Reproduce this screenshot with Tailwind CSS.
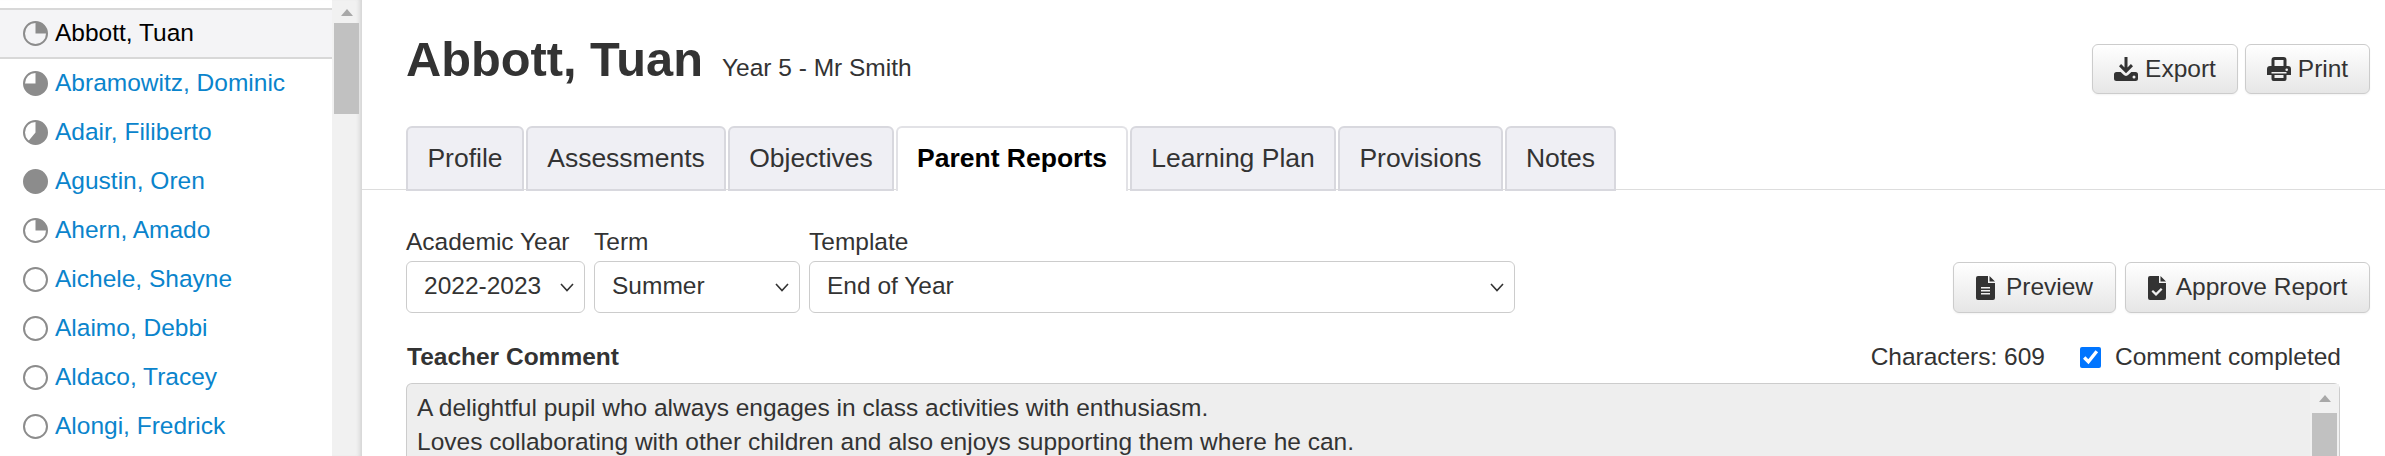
<!DOCTYPE html>
<html lang="en">
<head>
    <meta charset="UTF-8">
    <title>Abbott, Tuan</title>
    <script src="https://cdn.jsdelivr.net/npm/@tailwindcss/browser@4"></script>
</head>
<body class="bg-white font-['Liberation_Sans',Arial,sans-serif] text-[24.5px] text-[#333] overflow-hidden">
<div class="flex h-[456px] w-[2385px] overflow-hidden">

    <!-- pupil list -->
    <aside class="flex w-[362px] shrink-0 shadow-[inset_-6px_0_5px_-4px_#d0d0d0]">
        <ul class="w-[332px] pt-2">
            <li class="flex h-[51px] items-center gap-[7px] border-y-2 border-[#d8d8d8] bg-[#f4f4f6] pl-[23px] text-black">
                <svg class="w-[25px] h-[25px]" viewBox="0 0 25 25"><circle cx="12.5" cy="12.5" r="11.5" fill="none" stroke="#8c8c8c" stroke-width="2"/><path d="M12.5 12.5V1A11.5 11.5 0 0 1 24 12.5Z" fill="#8c8c8c"/></svg>
                <span>Abbott, Tuan</span>
            </li>
            <li class="flex h-[49px] items-center gap-[7px] pl-[23px] text-[#0a84cc]">
                <svg class="w-[25px] h-[25px]" viewBox="0 0 25 25"><circle cx="12.5" cy="12.5" r="11.5" fill="none" stroke="#8c8c8c" stroke-width="2"/><path d="M12.5 12.5V1A11.5 11.5 0 1 1 1 12.5Z" fill="#8c8c8c"/></svg>
                <span>Abramowitz, Dominic</span>
            </li>
            <li class="flex h-[49px] items-center gap-[7px] pl-[23px] text-[#0a84cc]">
                <svg class="w-[25px] h-[25px]" viewBox="0 0 25 25"><circle cx="12.5" cy="12.5" r="11.5" fill="none" stroke="#8c8c8c" stroke-width="2"/><path d="M12.5 12.5V1A11.5 11.5 0 1 1 5 21.5Z" fill="#8c8c8c"/></svg>
                <span>Adair, Filiberto</span>
            </li>
            <li class="flex h-[49px] items-center gap-[7px] pl-[23px] text-[#0a84cc]">
                <svg class="w-[25px] h-[25px]" viewBox="0 0 25 25"><circle cx="12.5" cy="12.5" r="12.5" fill="#8c8c8c"/></svg>
                <span>Agustin, Oren</span>
            </li>
            <li class="flex h-[49px] items-center gap-[7px] pl-[23px] text-[#0a84cc]">
                <svg class="w-[25px] h-[25px]" viewBox="0 0 25 25"><circle cx="12.5" cy="12.5" r="11.5" fill="none" stroke="#8c8c8c" stroke-width="2"/><path d="M12.5 12.5V1A11.5 11.5 0 0 1 24 12.5Z" fill="#8c8c8c"/></svg>
                <span>Ahern, Amado</span>
            </li>
            <li class="flex h-[49px] items-center gap-[7px] pl-[23px] text-[#0a84cc]">
                <svg class="w-[25px] h-[25px]" viewBox="0 0 25 25"><circle cx="12.5" cy="12.5" r="11.5" fill="none" stroke="#8c8c8c" stroke-width="2"/></svg>
                <span>Aichele, Shayne</span>
            </li>
            <li class="flex h-[49px] items-center gap-[7px] pl-[23px] text-[#0a84cc]">
                <svg class="w-[25px] h-[25px]" viewBox="0 0 25 25"><circle cx="12.5" cy="12.5" r="11.5" fill="none" stroke="#8c8c8c" stroke-width="2"/></svg>
                <span>Alaimo, Debbi</span>
            </li>
            <li class="flex h-[49px] items-center gap-[7px] pl-[23px] text-[#0a84cc]">
                <svg class="w-[25px] h-[25px]" viewBox="0 0 25 25"><circle cx="12.5" cy="12.5" r="11.5" fill="none" stroke="#8c8c8c" stroke-width="2"/></svg>
                <span>Aldaco, Tracey</span>
            </li>
            <li class="flex h-[49px] items-center gap-[7px] pl-[23px] text-[#0a84cc]">
                <svg class="w-[25px] h-[25px]" viewBox="0 0 25 25"><circle cx="12.5" cy="12.5" r="11.5" fill="none" stroke="#8c8c8c" stroke-width="2"/></svg>
                <span>Alongi, Fredrick</span>
            </li>
        </ul>
        <div class="flex w-[30px] flex-col bg-[#f1f1f1] pl-[2px] pr-[3px] shadow-[inset_-5px_0_4px_-3px_#d0d0d0]">
            <div class="flex h-[23px] items-center justify-center pt-[1px]">
                <div class="h-0 w-0 border-x-[6.5px] border-b-[7px] border-x-transparent border-b-[#a8a8a8]"></div>
            </div>
            <div class="h-[91px] bg-[#c1c1c1]"></div>
        </div>
    </aside>

    <!-- pupil detail -->
    <main class="min-w-0 flex-1">
        <div class="flex h-[126px] justify-between pl-[44px] pr-[15px]">
            <div class="flex items-baseline gap-[19px] pt-[29px]">
                <h1 class="text-[48.75px] leading-[60px] font-bold text-[#333]">Abbott, Tuan</h1>
                <span class="leading-none">Year 5 - Mr Smith</span>
            </div>
            <div class="flex gap-[7px] pt-[44px]">
                <button class="flex h-[50px] w-[146px] items-center justify-center gap-[7px] rounded-[6px] border border-[#ccc] bg-gradient-to-b from-white to-[#e6e6e6] shadow-[0_1px_2px_#0000000d]">
                    <svg class="w-[24px] h-[24px]" viewBox="0 0 24 24" fill="#333"><path d="M10.5 0h3v10.5l3.4-3.4 2.1 2.1-7 7-7-7 2.1-2.1 3.4 3.4Z"/><path d="M2.500 15h4.200l2.600 2.600a3.800 3.800 0 0 0 5.400 0l2.600-2.600h4.200a2.500 2.500 0 0 1 2.500 2.500v4a2.500 2.500 0 0 1-2.500 2.500h-19a2.500 2.500 0 0 1-2.500-2.500v-4A2.500 2.500 0 0 1 2.500 15Zm17.500 6.500a1.500 1.500 0 1 0 0-3 1.500 1.500 0 0 0 0 3Z" fill-rule="evenodd"/></svg>
                    <span>Export</span>
                </button>
                <button class="flex h-[50px] w-[125px] items-center justify-center gap-[7px] rounded-[6px] border border-[#ccc] bg-gradient-to-b from-white to-[#e6e6e6] shadow-[0_1px_2px_#0000000d]">
                    <svg class="w-[24px] h-[24px]" viewBox="0 0 24 24" fill="#333"><path fill-rule="evenodd" d="M4.500 9V3a3 3 0 0 1 3-3h9a3 3 0 0 1 3 3v6h-3V3h-9v6ZM3 9h18a3 3 0 0 1 3 3v6h-4.500v-3h-15v3H0v-6a3 3 0 0 1 3-3Zm18 3.800a1.300 1.300 0 1 0-2.600 0 1.300 1.300 0 0 0 2.600 0ZM4.500 16.500h15V22a2 2 0 0 1-2 2h-11a2 2 0 0 1-2-2Zm3 1.500v3h9v-3Z"/></svg>
                    <span>Print</span>
                </button>
            </div>
        </div>

        <!-- tabs -->
        <div class="flex h-[64px] gap-[2px] border-b border-[#ddd] pl-[44px] text-[26.5px]">
            <a class="h-[65px] w-[118px] rounded-t-[6px] border-2 border-[#d8d8de] bg-[#efeff4] text-center leading-[60px]">Profile</a>
            <a class="h-[65px] w-[200px] rounded-t-[6px] border-2 border-[#d8d8de] bg-[#efeff4] text-center leading-[60px]">Assessments</a>
            <a class="h-[65px] w-[166px] rounded-t-[6px] border-2 border-[#d8d8de] bg-[#efeff4] text-center leading-[60px]">Objectives</a>
            <a class="h-[65px] w-[232px] rounded-t-[6px] border-2 border-b-0 border-[#e2e2e6] bg-white text-center font-bold leading-[60px] text-black">Parent Reports</a>
            <a class="h-[65px] w-[206px] rounded-t-[6px] border-2 border-[#d8d8de] bg-[#efeff4] text-center leading-[60px]">Learning Plan</a>
            <a class="h-[65px] w-[165px] rounded-t-[6px] border-2 border-[#d8d8de] bg-[#efeff4] text-center leading-[60px]">Provisions</a>
            <a class="h-[65px] w-[111px] rounded-t-[6px] border-2 border-[#d8d8de] bg-[#efeff4] text-center leading-[60px]">Notes</a>
        </div>

        <!-- report form -->
        <div class="pl-[44px] pr-[45px]">
            <div class="flex items-end justify-between pt-[38px]">
                <div class="flex gap-[9px]">
                    <label class="flex w-[179px] flex-col">
                        <span class="h-[33px] leading-[28px]">Academic Year</span>
                        <span class="relative">
                            <select class="h-[52px] w-full appearance-none rounded-[6px] border border-[#ccc] bg-white pb-[1px] pl-[17px]"><option>2022-2023</option></select>
                            <svg class="pointer-events-none absolute right-[11px] top-[22px] h-[9px] w-[14px]" viewBox="0 0 14 9" fill="none" stroke="#333" stroke-width="1.600"><path d="M1 1l6 6.500L13 1"/></svg>
                        </span>
                    </label>
                    <label class="flex w-[206px] flex-col">
                        <span class="h-[33px] leading-[28px]">Term</span>
                        <span class="relative">
                            <select class="h-[52px] w-full appearance-none rounded-[6px] border border-[#ccc] bg-white pb-[1px] pl-[17px]"><option>Summer</option></select>
                            <svg class="pointer-events-none absolute right-[11px] top-[22px] h-[9px] w-[14px]" viewBox="0 0 14 9" fill="none" stroke="#333" stroke-width="1.600"><path d="M1 1l6 6.500L13 1"/></svg>
                        </span>
                    </label>
                    <label class="flex w-[706px] flex-col">
                        <span class="h-[33px] leading-[28px]">Template</span>
                        <span class="relative">
                            <select class="h-[52px] w-full appearance-none rounded-[6px] border border-[#ccc] bg-white pb-[1px] pl-[17px]"><option>End of Year</option></select>
                            <svg class="pointer-events-none absolute right-[11px] top-[22px] h-[9px] w-[14px]" viewBox="0 0 14 9" fill="none" stroke="#333" stroke-width="1.600"><path d="M1 1l6 6.500L13 1"/></svg>
                        </span>
                    </label>
                </div>
                <div class="mr-[-30px] flex gap-[9px]">
                    <button class="flex h-[51px] w-[163px] items-center justify-center gap-[11px] rounded-[6px] border border-[#ccc] bg-gradient-to-b from-white to-[#e6e6e6] shadow-[0_1px_2px_#0000000d]">
                        <svg class="w-[19px] h-[24px]" viewBox="0 0 19 24" fill="#333"><path fill-rule="evenodd" d="M2 0h10v7h7v15a2 2 0 0 1-2 2H2a2 2 0 0 1-2-2V2a2 2 0 0 1 2-2Zm3 11v1.500h9V11Zm0 3v1.500h9V14Zm0 3v1.500h9V17ZM13.500 0 19 5.500h-5.500Z"/></svg>
                        <span>Preview</span>
                    </button>
                    <button class="flex h-[51px] w-[245px] items-center justify-center gap-[10px] rounded-[6px] border border-[#ccc] bg-gradient-to-b from-white to-[#e6e6e6] shadow-[0_1px_2px_#0000000d]">
                        <svg class="w-[18px] h-[24px]" viewBox="0 0 18 24" fill="#333"><path fill-rule="evenodd" d="M2 0h9v7h7v15a2 2 0 0 1-2 2H2a2 2 0 0 1-2-2V2a2 2 0 0 1 2-2Zm1.500 15.500L8 20l6.500-6.500-1.600-1.600L8 16.800l-3-2.900ZM12.500 0 18 5.500h-5.500Z"/></svg>
                        <span>Approve Report</span>
                    </button>
                </div>
            </div>

            <div class="mt-[19px] flex h-[51px] items-center justify-between">
                <span class="pl-[1px] font-bold">Teacher Comment</span>
                <div class="mr-[-1px] flex items-center">
                    <span>Characters: 609</span>
                    <input type="checkbox" checked class="ml-[35px] mr-[14px] h-[21px] w-[21px] accent-[#0075ff]">
                    <span>Comment completed</span>
                </div>
            </div>

            <div class="flex h-[100px] rounded-t-[6px] border border-b-0 border-[#ccc] bg-[#eeeeee]">
                <div class="min-w-0 flex-1 pl-[10px] pt-[7px] leading-[34px]">
                    <p>A delightful pupil who always engages in class activities with enthusiasm.</p>
                    <p>Loves collaborating with other children and also enjoys supporting them where he can.</p>
                </div>
                <div class="flex w-[29px] flex-col bg-[#f1f1f1] px-[2px]">
                    <div class="flex h-[29px] items-center justify-center">
                        <div class="h-0 w-0 border-x-[6.5px] border-b-[7px] border-x-transparent border-b-[#a8a8a8]"></div>
                    </div>
                    <div class="flex-1 bg-[#c1c1c1]"></div>
                </div>
            </div>
        </div>
    </main>
</div>
</body>
</html>
